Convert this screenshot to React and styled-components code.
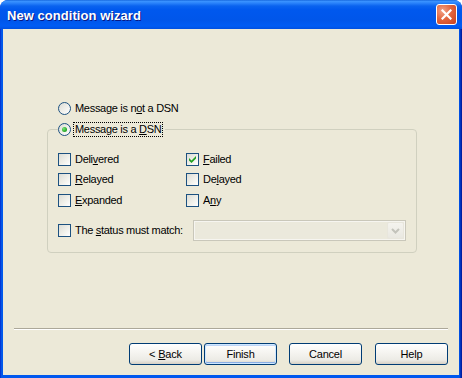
import React from "react";
import styled, { createGlobalStyle, css } from "styled-components";

const Global = createGlobalStyle`
  html, body { margin: 0; padding: 0; background: #ffffff; }
  body { width: 462px; height: 378px; overflow: hidden; }
  * { box-sizing: border-box; }
`;

const Window = styled.div`
  width: 462px;
  height: 378px;
  display: flex;
  flex-direction: column;
  border-radius: 8px 8px 0 0;
  overflow: hidden;
  background: linear-gradient(to right, #0019cf 0, #0855dd 1px, #0058ee 2px, #0058ee 459px, #0047d8 460px, #001ea0 461px);
  font-family: "Liberation Sans", Arial, sans-serif;
`;

const TitleBar = styled.div`
  height: 29px;
  flex: none;
  display: flex;
  align-items: center;
  padding: 1px 5px 0 7px;
  background: linear-gradient(
    to bottom,
    #0a5ad4 0px,
    #3d95ff 1px,
    #2b84fb 3px,
    #0a63ef 6px,
    #0058ee 10px,
    #0056ea 20px,
    #005cf4 26px,
    #0050e0 29px
  );
`;

const Title = styled.div`
  flex: 1;
  color: #ffffff;
  font-weight: bold;
  font-size: 13px;
  text-shadow: 1px 1px 0 #0a1883;
  letter-spacing: 0.05px;
`;

const CloseButton = styled.div`
  width: 21px;
  height: 21px;
  border: 1px solid #ffffff;
  border-radius: 3px;
  background: radial-gradient(circle at 30% 30%, #f2a287 0%, #e2663f 45%, #c8401c 100%);
  display: flex;
  align-items: center;
  justify-content: center;
  margin-top: -1px;
`;

const Body = styled.div`
  flex: 1;
  margin: 0 3px 3px 3px;
  background: #ece9d8;
  display: flex;
  flex-direction: column;
  font-size: 11px;
  letter-spacing: -0.3px;
  color: #000;
`;

const Content = styled.div`
  flex: 1;
  padding: 73px 0 0 44px;
  display: flex;
  flex-direction: column;
`;

const OptionRow = styled.div`
  display: flex;
  align-items: center;
  height: 13px;
  margin-left: 11px;
  margin-bottom: 8px;
`;

const RadioCircle = styled.span`
  width: 13px;
  height: 13px;
  flex: none;
  border-radius: 50%;
  border: 1px solid #1c5180;
  background: linear-gradient(135deg, #dcdcd5 0%, #f2f2ee 60%, #ffffff 100%);
  display: flex;
  align-items: center;
  justify-content: center;
  margin-right: 4px;
  ${(p) =>
    p.$checked &&
    css`
      &::after {
        content: "";
        width: 5px;
        height: 5px;
        border-radius: 50%;
        background: radial-gradient(circle at 35% 35%, #7be27a 0%, #30b230 55%, #1a8e1a 100%);
      }
    `}
`;

const Label = styled.span`
  line-height: 13px;
  white-space: nowrap;
  ${(p) =>
    p.$focus &&
    css`
      outline: 1px dotted #000;
      outline-offset: 0;
      padding: 0 1px;
      margin-left: -1px;
    `}
`;

const U = styled.span`
  text-decoration: underline;
  text-underline-offset: 1px;
`;

const Group = styled.fieldset`
  width: 370px;
  height: 130px;
  margin: 0;
  padding: 17px 10px 0 10px;
  border: 1px solid #d0d0bf;
  border-radius: 4px;
  display: block;
`;

const Legend = styled.legend`
  padding: 0 3px 0 0;
  margin-left: 0;
  height: 13px;
  display: flex;
  align-items: center;
`;

const CheckGrid = styled.div`
  display: grid;
  grid-template-columns: 128px 1fr;
  grid-template-rows: 20px 21px 26px;
`;

const CheckItem = styled.div`
  display: flex;
  align-items: flex-start;
`;

const Box = styled.span`
  width: 13px;
  height: 13px;
  flex: none;
  border: 1px solid #1c5180;
  background: linear-gradient(135deg, #dcdcd5 0%, #f0f0ea 55%, #ffffff 100%);
  margin-right: 4px;
  display: flex;
  align-items: center;
  justify-content: center;
`;

const StatusRow = styled.div`
  display: flex;
  align-items: center;
  justify-content: space-between;
  height: 21px;
`;

const StatusLabel = styled.div`
  display: flex;
  align-items: center;
`;

const Combo = styled.div`
  width: 213px;
  height: 21px;
  border: 1px solid #c9c7ba;
  background: #ebe9dc;
  padding: 2px;
  display: flex;
  justify-content: flex-end;
  box-shadow: inset 0 0 0 1px #f6f5f0;
`;

const ComboButton = styled.div`
  width: 17px;
  height: 17px;
  margin: -1px -1px 0 0;
  border: 1px solid #e8e6dc;
  border-radius: 2px;
  background: linear-gradient(#f4f3ee, #e9e8e1);
  display: flex;
  align-items: center;
  justify-content: center;
`;

const Separator = styled.div`
  margin: 0 11px;
  height: 2px;
  border-top: 1px solid #aca899;
  border-bottom: 1px solid #ffffff;
  flex: none;
`;

const ButtonRow = styled.div`
  display: flex;
  justify-content: flex-end;
  padding: 13px 11px 10px 0;
  flex: none;
`;

const Button = styled.div`
  width: 73px;
  height: 22px;
  margin-left: ${(p) => p.$gap || 0}px;
  border: 1px solid #003c74;
  border-radius: 3px;
  background: linear-gradient(to bottom, #ffffff 0%, #f6f5f1 40%, #ecebe5 80%, #d6d0c5 100%);
  display: flex;
  align-items: center;
  justify-content: center;
  font-size: 11px;
  letter-spacing: -0.2px;
  ${(p) =>
    p.$default &&
    css`
      box-shadow: inset 0 0 0 1px #cee7ff, inset 0 1px 0 1px #bcd4f6, inset 0 -1px 0 1px #89ade4;
    `}
`;

const ButtonText = styled.span`
  white-space: pre;
`;

function Check({ checked, children }) {
  return (
    <CheckItem>
      <Box>
        {checked && (
          <svg width="7" height="7" viewBox="0 0 7 7">
            <path d="M0 2 L0 4.5 L2.5 7 L7 2.5 L7 0 L2.5 4.5 Z" fill="#21a121" />
          </svg>
        )}
      </Box>
      <Label>{children}</Label>
    </CheckItem>
  );
}

export default function App() {
  return (
    <>
      <Global />
      <Window>
        <TitleBar>
          <Title>New condition wizard</Title>
          <CloseButton>
            <svg width="11" height="11" viewBox="0 0 11 11">
              <path d="M1.5 1.5 L9.5 9.5 M9.5 1.5 L1.5 9.5" stroke="#fff" strokeWidth="2.2" strokeLinecap="square" />
            </svg>
          </CloseButton>
        </TitleBar>
        <Body>
          <Content>
            <OptionRow>
              <RadioCircle />
              <Label>
                Message is n<U>o</U>t a DSN
              </Label>
            </OptionRow>
            <Group>
              <Legend>
                <RadioCircle $checked />
                <Label $focus>
                  Message is a <U>D</U>SN
                </Label>
              </Legend>
              <CheckGrid>
                <Check>
                  Deli<U>v</U>ered
                </Check>
                <Check checked>
                  <U>F</U>ailed
                </Check>
                <Check>
                  <U>R</U>elayed
                </Check>
                <Check>
                  De<U>l</U>ayed
                </Check>
                <Check>
                  <U>E</U>xpanded
                </Check>
                <Check>
                  A<U>n</U>y
                </Check>
              </CheckGrid>
              <StatusRow>
                <StatusLabel>
                  <Box />
                  <Label>
                    The <U>s</U>tatus must match:
                  </Label>
                </StatusLabel>
                <Combo>
                  <ComboButton>
                    <svg width="9" height="6" viewBox="0 0 9 6">
                      <path d="M1 1 L4.5 4.5 L8 1" stroke="#c3c3bb" strokeWidth="2" fill="none" />
                    </svg>
                  </ComboButton>
                </Combo>
              </StatusRow>
            </Group>
          </Content>
          <Separator />
          <ButtonRow>
            <Button>
              <ButtonText>
                {"< "}
                <U>B</U>ack
              </ButtonText>
            </Button>
            <Button $default $gap={2}>
              <ButtonText>Finish</ButtonText>
            </Button>
            <Button $gap={12}>
              <ButtonText>Cancel</ButtonText>
            </Button>
            <Button $gap={13}>
              <ButtonText>Help</ButtonText>
            </Button>
          </ButtonRow>
        </Body>
      </Window>
    </>
  );
}
